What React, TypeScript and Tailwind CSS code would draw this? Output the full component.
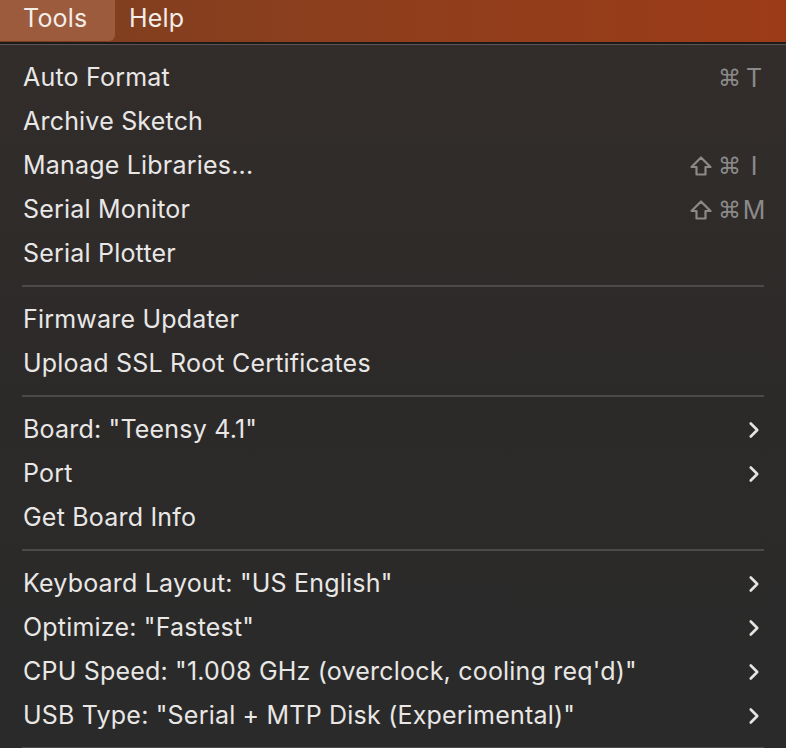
import { ChevronRight } from 'lucide-react';

type Item = {
  label: string;
  shift?: boolean;
  key?: string;
  sub?: boolean;
};

const groups: Item[][] = [
  [
    { label: 'Auto Format', key: 'T' },
    { label: 'Archive Sketch' },
    { label: 'Manage Libraries...', shift: true, key: 'I' },
    { label: 'Serial Monitor', shift: true, key: 'M' },
    { label: 'Serial Plotter' },
  ],
  [{ label: 'Firmware Updater' }, { label: 'Upload SSL Root Certificates' }],
  [
    { label: 'Board: "Teensy 4.1"', sub: true },
    { label: 'Port', sub: true },
    { label: 'Get Board Info' },
  ],
  [
    { label: 'Keyboard Layout: "US English"', sub: true },
    { label: 'Optimize: "Fastest"', sub: true },
    { label: 'CPU Speed: "1.008 GHz (overclock, cooling req\'d)"', sub: true },
    { label: 'USB Type: "Serial + MTP Disk (Experimental)"', sub: true },
  ],
];

function Shortcut({ shift, k }: { shift?: boolean; k: string }) {
  return (
    <div className="flex items-center text-[#8b8a89] text-[25px] leading-none -mr-[1px]">
      <span className="w-[28px] flex justify-start">
        {shift && (
          <svg width="22" height="20" viewBox="0 0 22 20" fill="none">
            <path
              d="M11 1.5 L20.5 11 H15.5 V18.5 H6.5 V11 H1.5 Z"
              stroke="#8b8a89"
              strokeWidth="2.2"
              strokeLinejoin="round"
            />
          </svg>
        )}
      </span>
      <span className="w-[26px] flex justify-start font-['DejaVu_Sans',sans-serif] text-[23px]">⌘</span>
      <span className="w-[20px] flex justify-center">{k}</span>
    </div>
  );
}

function Separator() {
  return (
    <div className="h-[22px] flex items-center px-[22px]">
      <div className="h-[2px] w-full bg-[#4d4b4a]" />
    </div>
  );
}

function Row({ item }: { item: Item }) {
  return (
    <div className="h-[44px] flex items-center justify-between pt-[2px] pl-[23px] pr-[23px]">
      <span className="text-[25px] text-[#e9e7e6] tracking-[0.2px]">{item.label}</span>
      {item.key && <Shortcut shift={item.shift} k={item.key} />}
      {item.sub && <ChevronRight className="text-[#e6e4e3] -mr-[4px]" size={26} strokeWidth={2.4} />}
    </div>
  );
}

export default function App() {
  return (
    <div className="w-[786px] h-[748px] overflow-hidden bg-[#2b2b2b] font-['Inter',sans-serif]">
      <div className="h-[42px] flex bg-gradient-to-r from-[#7c3f20] via-[#8f3e1c] to-[#9c3b17]">
        <div className="w-[115px] h-[41px] bg-[#9c5b3c] rounded-br-[6px] flex items-start pl-[23px]">
          <span className="text-[25px] text-[#f3ede9] tracking-[0.2px]">Tools</span>
        </div>
        <div className="flex items-start pl-[14px]">
          <span className="text-[25px] text-[#f3ede9] tracking-[0.2px]">Help</span>
        </div>
      </div>
      <div className="h-[2px] bg-[#1e1a19]" />
      <div className="h-[704px] bg-gradient-to-b from-[#322d2b] via-[#2c2a29] to-[#2a2a2a] border-t border-[#5a5554] pt-[10px]">
        {groups.map((g, gi) => (
          <div key={gi}>
            {gi > 0 && <Separator />}
            {g.map((it) => (
              <Row key={it.label} item={it} />
            ))}
          </div>
        ))}
        <Separator />
      </div>
    </div>
  );
}
